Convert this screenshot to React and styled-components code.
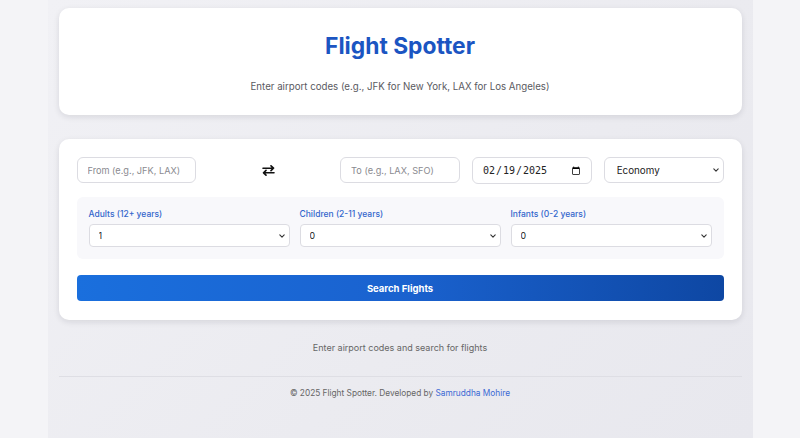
import React from "react";
import styled, { createGlobalStyle } from "styled-components";

const GlobalStyle = createGlobalStyle`
  html, body {
    margin: 0;
    padding: 0;
    background: #f4f4f7;
    font-family: Inter, "Noto Sans", "Liberation Sans", sans-serif;
  }
  * { box-sizing: border-box; }
`;

const chevron =
  "url(\"data:image/svg+xml,%3Csvg xmlns='http://www.w3.org/2000/svg' width='6' height='4' viewBox='0 0 6 4'%3E%3Cpath d='M0.8 0.9l2.2 2.2 2.2-2.2' fill='none' stroke='%23333' stroke-width='1.1' stroke-linecap='round' stroke-linejoin='round'/%3E%3C/svg%3E\")";

const Container = styled.div`
  width: 705px;
  margin: 0 auto;
  min-height: 438px;
  padding: 8px 11px 0;
  background: linear-gradient(135deg, #f1f1f5 0%, #ebebf0 60%, #e8e8ee 100%);
`;

const Card = styled.section`
  background: #ffffff;
  border-radius: 10px;
  box-shadow: 0 2px 6px rgba(20, 20, 40, 0.11);
  padding: ${(p) => p.$padding || "18px"};
  margin-top: ${(p) => p.$mt || 0}px;
`;

const HeaderCard = styled(Card)`
  height: 107px;
  text-align: center;
  padding: 24px 18px 0;
`;

const Title = styled.h1`
  margin: 0;
  font-size: 22.8px;
  line-height: 28px;
  font-weight: 700;
  color: #1b55c2;
`;

const Subtitle = styled.p`
  margin: 20px 0 0;
  font-size: 9.7px;
  line-height: 14px;
  color: #5a5a5f;
`;

const InputRow = styled.div`
  display: grid;
  grid-template-columns: repeat(5, 1fr);
  gap: 12px;
  align-items: start;
`;

const fieldBase = `
  height: 26px;
  border: 1px solid #dcdce2;
  border-radius: 6px;
  background-color: #fff;
  width: 100%;
  outline: none;
  margin: 0;
`;

const TextInput = styled.input`
  ${fieldBase}
  padding: 0 10px;
  font-family: Inter, "Noto Sans", sans-serif;
  font-size: 9.2px;
  color: #333;
  &::placeholder { color: #8a8a90; }
`;

const DateInput = styled.input`
  ${fieldBase}
  height: 27px;
  padding: 0 8px 0 9px;
  font-family: "DejaVu Sans Mono", "Liberation Mono", monospace;
  font-size: 10px;
  color: #222;
`;

const ClassSelect = styled.select`
  ${fieldBase}
  appearance: none;
  -webkit-appearance: none;
  padding: 0 16px 0 12px;
  background-image: ${chevron};
  background-repeat: no-repeat;
  background-position: right 4px center;
  font-family: Inter, "Noto Sans", sans-serif;
  font-size: 9.8px;
  color: #222;
`;

const SwapButton = styled.button`
  justify-self: center;
  align-self: center;
  border: none;
  background: none;
  padding: 0;
  width: 16px;
  height: 16px;
  display: flex;
  align-items: center;
  justify-content: center;
  color: #111;
  cursor: pointer;
`;

const PassengerBox = styled.div`
  margin-top: 13px;
  background: #f8f8fb;
  border-radius: 6px;
  padding: 11px 12px 12px;
  display: grid;
  grid-template-columns: repeat(3, 1fr);
  gap: 10px;
`;

const Field = styled.label`
  display: flex;
  flex-direction: column;
  gap: 4px;
`;

const FieldLabel = styled.span`
  font-size: 8.5px;
  line-height: 12px;
  font-weight: 500;
  color: #3366cc;
`;

const CountSelect = styled.select`
  appearance: none;
  -webkit-appearance: none;
  margin: 0;
  height: 23px;
  width: 100%;
  border: 1px solid #dcdce2;
  border-radius: 4px;
  background-color: #fff;
  background-image: ${chevron};
  background-repeat: no-repeat;
  background-position: right 4px center;
  padding: 0 14px 0 9px;
  font-family: Inter, "Noto Sans", sans-serif;
  font-size: 8.8px;
  color: #222;
  outline: none;
`;

const SearchButton = styled.button`
  margin-top: 16px;
  width: 100%;
  height: 26px;
  border: none;
  border-radius: 4px;
  background: linear-gradient(90deg, #1a6fdd 0%, #1a62cf 50%, #0e47a3 100%);
  color: #fff;
  font-family: Inter, "Noto Sans", sans-serif;
  font-size: 9.5px;
  font-weight: 700;
  cursor: pointer;
  display: block;
`;

const Status = styled.p`
  margin: 21px 0 0;
  text-align: center;
  font-size: 9px;
  line-height: 14px;
  color: #666;
`;

const Footer = styled.footer`
  margin-top: 21px;
  border-top: 1px solid #dedee4;
  padding-top: 10px;
  text-align: center;
  font-size: 8.3px;
  line-height: 12px;
  color: #666;
`;

const Link = styled.a`
  color: #3b69d4;
  text-decoration: none;
`;

const SwapIcon = () => (
  <svg width="13" height="11" viewBox="0 0 13 11" fill="none" stroke="currentColor" strokeWidth="1.6" strokeLinecap="round" strokeLinejoin="round">
    <path d="M1 3.2h10.5M9 0.8l2.5 2.4L9 5.6" />
    <path d="M12 7.8H1.5M4 5.4L1.5 7.8 4 10.2" />
  </svg>
);

const counts = (from, to) => Array.from({ length: to - from + 1 }, (_, i) => from + i);

export default function App() {
  return (
    <>
      <GlobalStyle />
      <Container>
        <HeaderCard>
          <Title>Flight Spotter</Title>
          <Subtitle>Enter airport codes (e.g., JFK for New York, LAX for Los Angeles)</Subtitle>
        </HeaderCard>

        <Card $mt={24} $padding="18px 18px 19px">
          <InputRow>
            <TextInput placeholder="From (e.g., JFK, LAX)" />
            <SwapButton aria-label="Swap airports">
              <SwapIcon />
            </SwapButton>
            <TextInput placeholder="To (e.g., LAX, SFO)" />
            <DateInput type="date" defaultValue="2025-02-19" />
            <ClassSelect defaultValue="economy">
              <option value="economy">Economy</option>
              <option value="premium">Premium Economy</option>
              <option value="business">Business</option>
              <option value="first">First</option>
            </ClassSelect>
          </InputRow>

          <PassengerBox>
            <Field>
              <FieldLabel>Adults (12+ years)</FieldLabel>
              <CountSelect defaultValue="1">
                {counts(1, 9).map((n) => (
                  <option key={n} value={n}>{n}</option>
                ))}
              </CountSelect>
            </Field>
            <Field>
              <FieldLabel>Children (2-11 years)</FieldLabel>
              <CountSelect defaultValue="0">
                {counts(0, 8).map((n) => (
                  <option key={n} value={n}>{n}</option>
                ))}
              </CountSelect>
            </Field>
            <Field>
              <FieldLabel>Infants (0-2 years)</FieldLabel>
              <CountSelect defaultValue="0">
                {counts(0, 4).map((n) => (
                  <option key={n} value={n}>{n}</option>
                ))}
              </CountSelect>
            </Field>
          </PassengerBox>

          <SearchButton>Search Flights</SearchButton>
        </Card>

        <Status>Enter airport codes and search for flights</Status>

        <Footer>
          © 2025 Flight Spotter. Developed by <Link href="#">Samruddha Mohire</Link>
        </Footer>
      </Container>
    </>
  );
}
